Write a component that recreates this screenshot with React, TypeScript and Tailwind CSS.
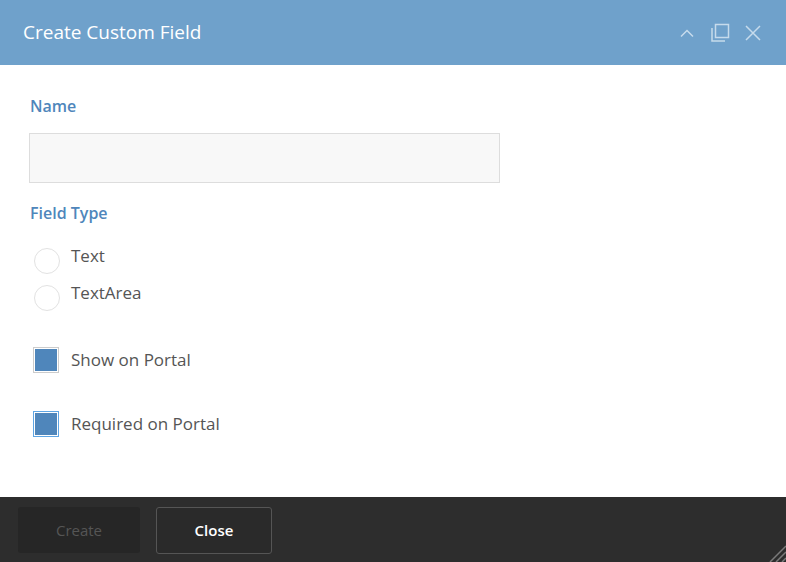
import { useState } from 'react';

export default function App() {
  const [type, setType] = useState<string | null>(null);
  const [showPortal, setShowPortal] = useState(true);
  const [requiredPortal, setRequiredPortal] = useState(true);

  return (
    <div
      className="relative flex h-[562px] w-[786px] flex-col overflow-hidden bg-white"
      style={{ fontFamily: '"Open Sans", "Noto Sans", sans-serif' }}
    >
      {/* Header */}
      <div className="flex h-[65px] shrink-0 items-center justify-between bg-[#6fa1cb] pl-[23px] pr-[24px]">
        <h1 className="text-[19px] leading-none text-white">Create Custom Field</h1>
        <div className="flex items-center gap-[14px] text-[#c6dbec]">
          <svg width="18" height="18" viewBox="0 0 18 18" fill="none" stroke="currentColor" strokeWidth="1.5">
            <path d="M3 12.5 L9 6.5 L15 12.5" />
          </svg>
          <svg width="20" height="20" viewBox="0 0 20 20" fill="none" stroke="currentColor" strokeWidth="1.5">
            <rect x="5.5" y="1.5" width="13" height="13" />
            <path d="M2 5 V18 H15" />
          </svg>
          <svg width="18" height="18" viewBox="0 0 18 18" fill="none" stroke="currentColor" strokeWidth="1.5">
            <path d="M2 2 L16 16 M16 2 L2 16" />
          </svg>
        </div>
      </div>

      {/* Body */}
      <div className="flex flex-1 flex-col pl-[29px] pt-[30px]">
        <label className="ml-[1px] text-[16px] leading-[22px] font-semibold text-[#4f86bb]">Name</label>
        <input
          type="text"
          className="mt-[16px] h-[50px] w-[471px] border border-[#dddddd] bg-[#f8f8f8] px-3 text-[16px] outline-none"
        />
        <label className="ml-[1px] mt-[19px] text-[16px] leading-[22px] font-semibold text-[#4f86bb]">Field Type</label>

        <div className="mt-[21px] flex flex-col gap-[8px]">
          {['Text', 'TextArea'].map((t) => (
            <button
              key={t}
              onClick={() => setType(t)}
              className="flex items-start gap-[11px] pl-[5px] text-left"
            >
              <span className="mt-[3px] flex h-[26px] w-[26px] items-center justify-center rounded-full border border-[#e2e2e2] bg-white">
                {type === t && <span className="h-[12px] w-[12px] rounded-full bg-[#4f86bb]" />}
              </span>
              <span className="text-[17px] leading-[22px] text-[#555555]">{t}</span>
            </button>
          ))}
        </div>

        <button
          onClick={() => setShowPortal(!showPortal)}
          className="mt-[36px] flex items-center gap-[12px] pl-[4px] text-left"
        >
          <span className="flex h-[26px] w-[26px] items-center justify-center border border-[#cccccc] bg-white p-[1px]">
            <span className={showPortal ? 'h-full w-full bg-[#4f86bb]' : 'h-full w-full bg-white'} />
          </span>
          <span className="text-[17px] leading-[22px] text-[#555555]">Show on Portal</span>
        </button>

        <button
          onClick={() => setRequiredPortal(!requiredPortal)}
          className="mt-[38px] flex items-center gap-[12px] pl-[4px] text-left"
        >
          <span className="flex h-[26px] w-[26px] items-center justify-center border border-[#5fa5e3] bg-white p-[1px]">
            <span className={requiredPortal ? 'h-full w-full bg-[#4f86bb]' : 'h-full w-full bg-white'} />
          </span>
          <span className="text-[17px] leading-[22px] text-[#555555]">Required on Portal</span>
        </button>
      </div>

      {/* Footer */}
      <div className="flex h-[65px] shrink-0 items-center gap-[16px] bg-[#2d2d2d] pl-[18px]">
        <button className="mt-[1px] h-[46px] w-[122px] rounded-[3px] bg-[#262626] text-[15px] text-[#555555]">
          Create
        </button>
        <button className="mt-[1px] h-[47px] w-[116px] rounded-[3px] border border-[#555555] bg-[#2a2a2a] text-[15px] font-semibold text-white">
          Close
        </button>
      </div>

      {/* Resize grip */}
      <svg
        className="absolute bottom-0 right-0"
        width="20"
        height="20"
        viewBox="0 0 20 20"
        stroke="#7a7a7a"
        strokeWidth="1.5"
      >
        <path d="M20 4 L4 20 M20 10 L10 20 M20 16 L16 20" />
      </svg>
    </div>
  );
}
